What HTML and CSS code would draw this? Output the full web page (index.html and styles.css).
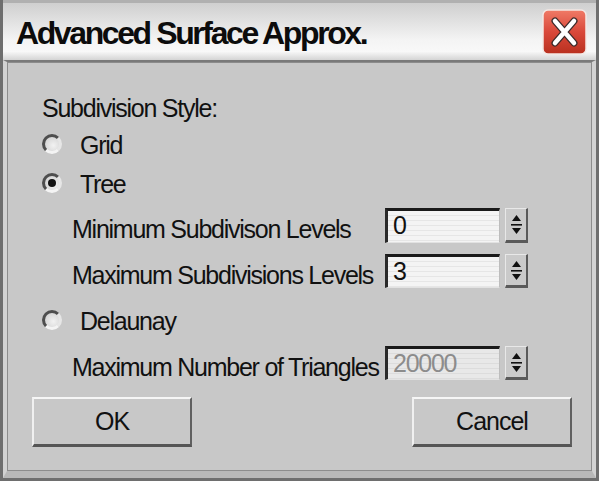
FILE: index.html
```html
<!DOCTYPE html>
<html>
<head>
<meta charset="utf-8">
<link rel="stylesheet" href="styles.css">
</head>
<body>
<div class="window">
  <div class="titlebar">
    <span class="title">Advanced Surface Approx.</span>
    <div class="close">
      <svg width="45" height="46" viewBox="0 0 45 46">
        <defs>
          <linearGradient id="rg" x1="0" y1="0" x2="0" y2="1">
            <stop offset="0" stop-color="#f07a66"/>
            <stop offset="0.5" stop-color="#d9483a"/>
            <stop offset="1" stop-color="#b8301f"/>
          </linearGradient>
        </defs>
        <rect x="1" y="1" width="43" height="44" rx="5" fill="url(#rg)" stroke="#f4e8e4" stroke-width="1.5"/>
        <path d="M13 12 L32 34 M32 12 L13 34" stroke="#3a2a2a" stroke-width="7" stroke-linecap="round"/>
        <path d="M13 12 L32 34 M32 12 L13 34" stroke="#ffffff" stroke-width="4.5" stroke-linecap="round"/>
      </svg>
    </div>
  </div>
  <div class="client">
    <div class="row style-label">Subdivision Style:</div>
    <div class="row radio-row r-grid"><span class="radio"></span><span class="rtext">Grid</span></div>
    <div class="row radio-row r-tree"><span class="radio checked"></span><span class="rtext">Tree</span></div>
    <div class="field r-min">
      <span class="flabel">Minimum Subdivison Levels</span>
      <div class="box">0</div>
      <div class="spin"><svg width="19" height="31" viewBox="0 0 19 31"><path d="M5 12 L9.5 6 L14 12 Z" fill="#111"/><rect x="4" y="15" width="11" height="1.6" fill="#111"/><path d="M5 19 L14 19 L9.5 25 Z" fill="#111"/></svg></div>
    </div>
    <div class="field r-max">
      <span class="flabel">Maximum Subdivisions Levels</span>
      <div class="box">3</div>
      <div class="spin"><svg width="19" height="30" viewBox="0 0 19 30"><path d="M5 12 L9.5 6 L14 12 Z" fill="#111"/><rect x="4" y="15" width="11" height="1.6" fill="#111"/><path d="M5 19 L14 19 L9.5 25 Z" fill="#111"/></svg></div>
    </div>
    <div class="row radio-row r-del"><span class="radio"></span><span class="rtext">Delaunay</span></div>
    <div class="field r-tri">
      <span class="flabel">Maximum Number of Triangles</span>
      <div class="box disabled">20000</div>
      <div class="spin"><svg width="19" height="30" viewBox="0 0 19 30"><path d="M5 12 L9.5 6 L14 12 Z" fill="#111"/><rect x="4" y="15" width="11" height="1.6" fill="#111"/><path d="M5 19 L14 19 L9.5 25 Z" fill="#111"/></svg></div>
    </div>
    <div class="buttons">
      <div class="btn">OK</div>
      <div class="btn">Cancel</div>
    </div>
  </div>
</div>
</body>
</html>
```
FILE: styles.css
```css
html, body {
  margin: 0;
  padding: 0;
  background: #c8c8c8;
}
body {
  font-family: "Liberation Sans", Arial, sans-serif;
  color: #111;
}
.window {
  width: 599px;
  height: 481px;
  box-sizing: border-box;
  background: #c8c8c8;
  border-left: 3px solid #6e6e6e;
  border-right: 3px solid #6e6e6e;
  border-bottom: 3px solid #6e6e6e;
  display: flex;
  flex-direction: column;
  overflow: hidden;
}
.titlebar {
  height: 60px;
  box-sizing: border-box;
  border-top: 3px solid #b0b0b0;
  background: linear-gradient(to bottom, #cfcfcf 0%, #e0e0e0 30%, #f4f4f4 65%, #f8f8f8 85%, #d4d4d4 100%);
  display: flex;
  align-items: center;
  justify-content: space-between;
  padding: 0 8px 0 13px;
}
.title {
  font-weight: bold;
  font-size: 32px;
  letter-spacing: -2.4px;
  color: #0c0c0c;
  margin-top: 4px;
}
.close {
  width: 45px;
  height: 46px;
  margin-right: 1px;
}
.close svg { display: block; }
.client {
  flex: 1;
  box-sizing: border-box;
  border-top: 2px solid #7a7a7a;
  border-left: 4px solid #d2d2d2;
  border-right: 4px solid #d2d2d2;
  border-bottom: 7px solid #b8b8b8;
  box-shadow: inset 1px 1px 0 #8c8c8c, inset -1px -1px 0 #8c8c8c;
  padding: 31px 16px 0 35px;
  font-size: 25px;
  letter-spacing: -1.25px;
}
.row {
  height: 30px;
  line-height: 30px;
  white-space: nowrap;
}
.radio-row {
  display: flex;
  align-items: center;
}
.r-grid { margin-top: 7px; }
.r-tree { margin-top: 9px; }
.r-del { margin-top: 18px; }
.radio {
  width: 20px;
  height: 20px;
  border-radius: 50%;
  box-sizing: border-box;
  border-style: solid;
  border-width: 3px;
  border-color: #4e4e4e #e6e6e6 #f4f4f4 #4e4e4e;
  background: radial-gradient(circle at 60% 60%, #f2f2f2 0%, #d6d6d6 75%);
  margin-left: 0px;
  margin-right: 18px;
  flex: none;
  position: relative;
  top: -1px;
}
.radio.checked::after {
  content: "";
  position: absolute;
  left: 3px;
  top: 3px;
  width: 8px;
  height: 8px;
  border-radius: 50%;
  background: #111;
}
.field {
  display: flex;
  align-items: stretch;
  height: 34px;
  margin-left: 30px;
}
.r-min { margin-top: 9px; height: 35px; }
.r-max { margin-top: 11px; }
.r-tri { margin-top: 10px; }
.flabel {
  width: 313px;
  flex: none;
  white-space: nowrap;
  line-height: 34px;
  padding-top: 4px;
  box-sizing: border-box;
}
.box {
  width: 115px;
  flex: none;
  box-sizing: border-box;
  border-top: 3px solid #1a1a1a;
  border-left: 3px solid #2a2a2a;
  border-right: 1px solid #bdbdbd;
  border-bottom: 1px solid #e2e2e2;
  background: repeating-linear-gradient(to bottom, #f4f4f4 0px, #f4f4f4 4px, #e6e6e6 4px, #e6e6e6 5px);
  padding-left: 5px;
  line-height: 28px;
  font-size: 25px;
  color: #111;
}
.box.disabled {
  color: #8c8c8c;
  background: repeating-linear-gradient(to bottom, #e8e8e8 0px, #e8e8e8 4px, #dcdcdc 4px, #dcdcdc 5px);
}
.spin {
  width: 23px;
  flex: none;
  margin-left: 5px;
  box-sizing: border-box;
  border-top: 1px solid #e8e8e8;
  border-left: 1px solid #e8e8e8;
  border-right: 2px solid #5a5a5a;
  border-bottom: 3px solid #5a5a5a;
  background: #cacaca;
  display: flex;
  align-items: flex-start;
  justify-content: center;
}
.spin svg { display: block; }
.buttons {
  display: flex;
  justify-content: space-between;
  margin-top: 17px;
  margin-left: -10px;
  margin-right: 4px;
}
.btn {
  width: 160px;
  height: 50px;
  box-sizing: border-box;
  border-top: 2px solid #f6f6f6;
  border-left: 2px solid #f0f0f0;
  border-right: 2px solid #606060;
  border-bottom: 3px solid #555555;
  background: #c8c8c8;
  text-align: center;
  line-height: 44px;
  font-size: 25px;
  letter-spacing: -1px;
}
```
